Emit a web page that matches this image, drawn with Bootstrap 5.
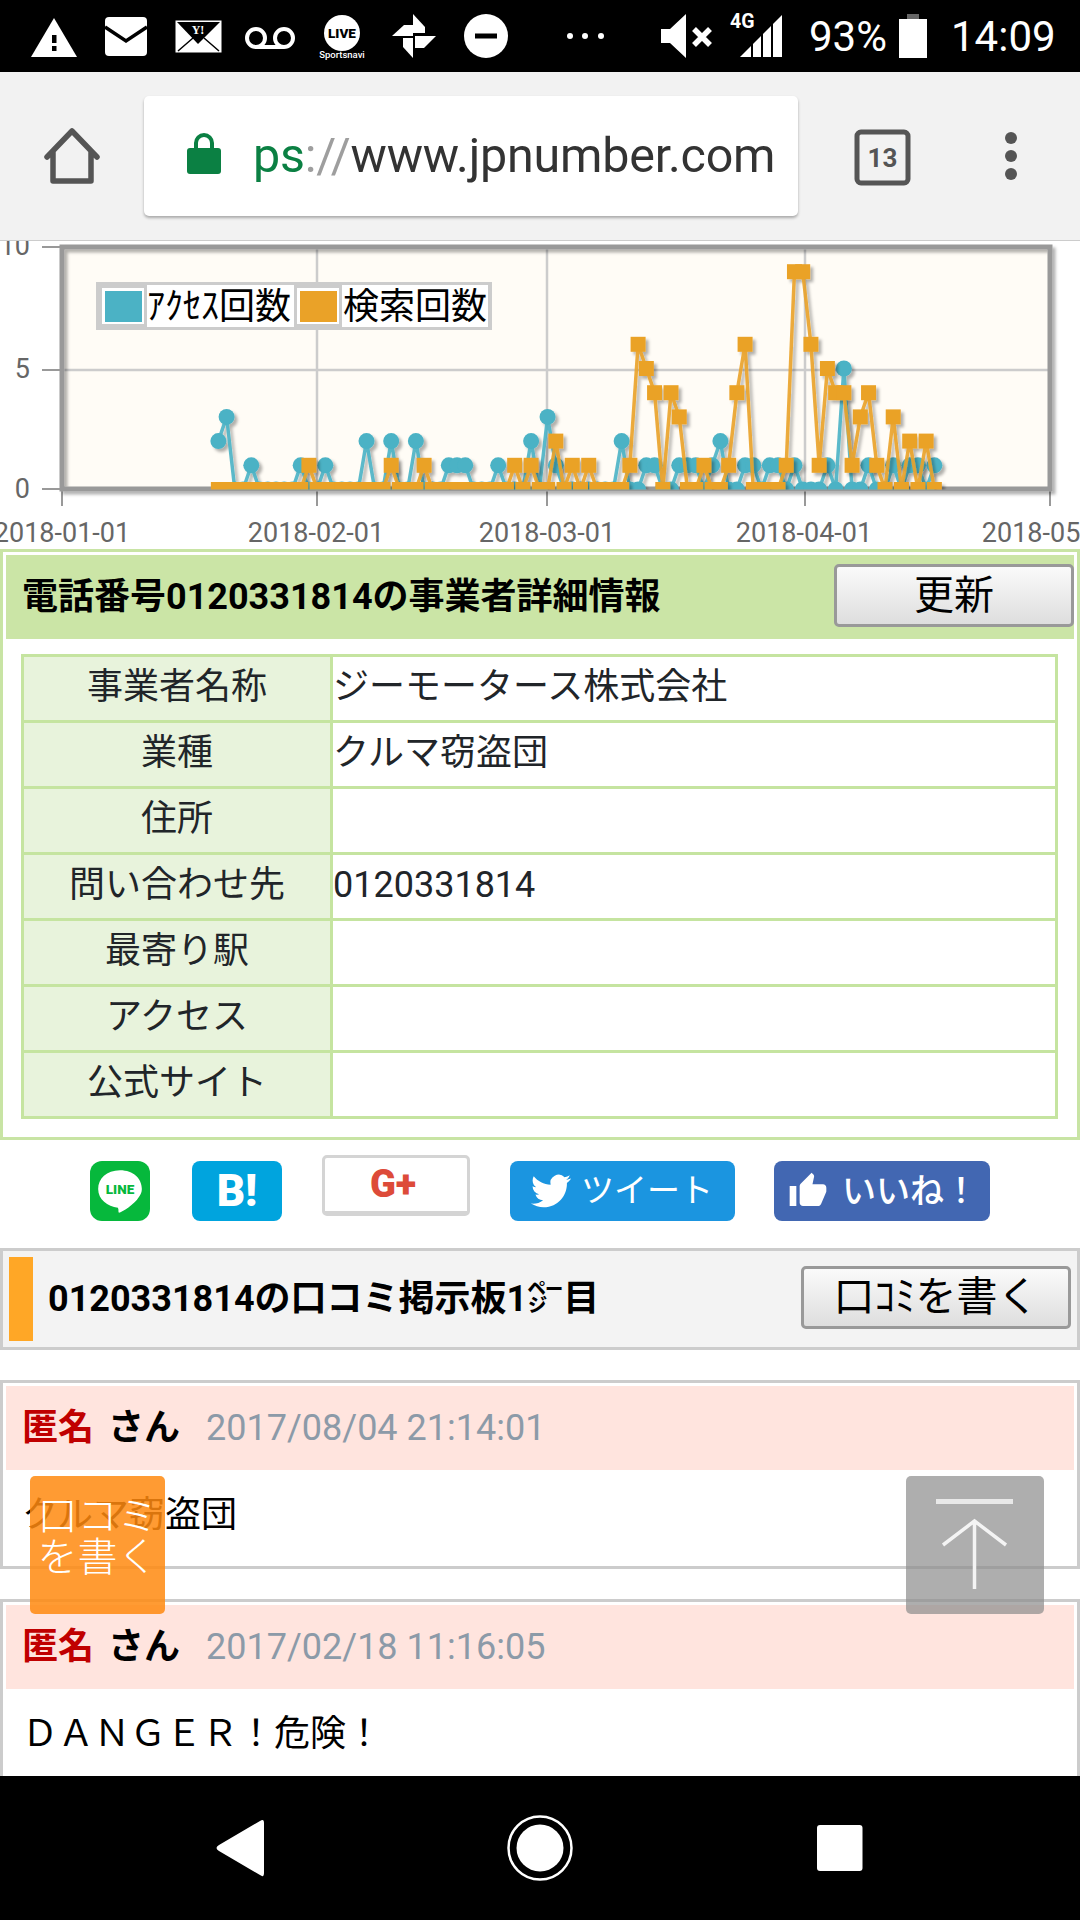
<!DOCTYPE html>
<html lang="ja">
<head>
    <meta charset="UTF-8">
    <meta name="viewport" content="width=device-width, initial-scale=1.0">
    <title>0120331814</title>
    <link href="https://cdn.jsdelivr.net/npm/bootstrap@5.3.0/dist/css/bootstrap.min.css" rel="stylesheet">
    <style>
        html, body { margin: 0; background: #fff; }
        body { width: 1080px; height: 1920px; overflow: hidden; font-family: Roboto, "Noto Sans CJK JP", sans-serif; font-size: 36px; color: #000; position: relative; }
        svg { display: block; flex: none; }
        .status-bar { height: 72px; background: #000; color: #fff; font-size: 42px; }
        .status-pct { width: 90px; margin-left: 19px; }
        .status-time { margin-left: 24px; }
        .browser-bar { height: 169px; background: #f2f2f2; border-bottom: 1px solid #ccc; padding: 24px 0 0 40px; }
        .url-box { width: 654px; height: 120px; margin-left: 44px; background: #fff; border-radius: 5px; box-shadow: 0 2px 3px rgba(0,0,0,.3); padding-left: 43px; white-space: nowrap; overflow: hidden; }
        .lock-icon { margin-top: -7px; }
        .url-text { font-size: 48.4px; color: #333; margin-left: 32px; letter-spacing: -.2px; }
        .url-scheme { color: #0b8043; }
        .url-slash { color: #9e9e9e; }
        .home-icon { margin-top: 24px; }
        .tab-icon { margin-top: 33px; margin-left: 56px; }
        .menu-icon { margin-top: 36px; margin-left: 90px; }
        .page-area { height: 1704px; overflow: hidden; }
        .chart-text { font-family: Roboto, sans-serif; font-size: 27px; fill: #666; }
        .legend-text { font-family: "Noto Sans CJK JP", sans-serif; font-size: 36px; fill: #000; }
        .info-box { height: 591px; border: 3px solid #c8e4a4; padding: 3px 3px 0 3px; }
        .info-head { height: 84px; background: #cbe5a6; padding: 0 0 0 16px; }
        .head-title { font-size: 36px; font-weight: 700; }
        .gray-btn { border: 3px solid #999; border-radius: 5px; background: linear-gradient(#fafafa, #dedede); color: #000; padding: 0; line-height: 1; }
        .gray-btn:hover { border-color: #999; color: #000; }
        .update-btn { width: 240px; height: 63px; font-size: 40px; margin-bottom: 3px; }
        .info-table-wrap { padding: 15px 0 0 15px; }
        table.info-table { width: 1037px; margin: 0; border-collapse: collapse; table-layout: fixed; }
        .info-table th, .info-table td { height: 66px; border: 3px solid #c5e4a0; padding: 0 0 3px 0; font-size: 36px; font-weight: 400; line-height: 1; vertical-align: middle; box-shadow: none; }
        .info-table th { width: 309px; background: #e8f3dc; text-align: center; }
        .share-row { height: 108px; padding-top: 15px; gap: 40px; }
        .share-item { height: 60px; margin-top: 6px; border-radius: 8px; color: #fff; overflow: hidden; white-space: nowrap; }
        .share-line { width: 60px; background: #06b83c; border-radius: 12px; }
        .share-hatena { width: 90px; margin-left: 2px; background: #00a4de; font-family: Roboto, sans-serif; font-weight: 900; font-size: 44px; }
        .share-plus { width: 148px; height: 61px; margin-top: 0; padding-right: 6px; border: 3px solid #d4d4d4; border-bottom-width: 5px; background: #fff; color: #dd4b39; font-family: Roboto, sans-serif; font-weight: 900; font-size: 38px; border-radius: 5px; }
        .share-tweet { width: 225px; background: #1b95e0; font-size: 33px; padding-left: 21px; gap: 10px; }
        .share-like { width: 216px; margin-left: -1px; background: #4267b2; font-size: 34px; font-weight: 500; padding-left: 14px; gap: 14px; }
        .board-head { height: 102px; background: #f3f3f3; border: 3px solid #ccc; padding: 6px; }
        .board-mark { width: 24px; height: 84px; background: #ffa726; margin-right: 15px; }
        .write-btn { width: 270px; height: 63px; font-size: 41px; margin-bottom: 3px; }
        .post-box { border: 3px solid #ccc; padding: 3px 3px 0 3px; margin-top: 30px; }
        .post-first { height: 189px; }
        .post-next { height: 300px; margin-top: 30px; }
        .post-head { height: 84px; background: #ffe4de; padding-left: 16px; white-space: nowrap; }
        .post-name { color: #c00000; font-weight: 700; }
        .post-san { font-weight: 700; margin-left: 14px; }
        .post-date { color: #8c9aa8; font-size: 36px; margin-left: 26px; }
        .post-body { padding: 24px 0 0 16px; line-height: 1.2; }
        .float-btn { position: absolute; top: 1476px; height: 138px; border-radius: 5px; }
        .float-write { left: 30px; width: 135px; background: rgba(255,137,15,.85); color: #fff; font-size: 40px; font-weight: 300; line-height: 41px; padding-top: 20px; }
        .float-top { left: 906px; width: 138px; background: rgba(140,140,140,.7); }
        .nav-bar { position: absolute; left: 0; top: 1776px; width: 1080px; height: 144px; background: #000; }
    </style>
</head>
<body>
    <div class="status-bar d-flex align-items-center">
        <svg width="790" height="72" viewBox="0 0 790 72">
            <polygon points="54,18 77,57 31,57" fill="#fff"/>
            <rect x="52" y="35" width="4.5" height="8" fill="#000"/>
            <rect x="52" y="46" width="4.5" height="5" fill="#000"/>
            <rect x="105" y="17" width="42" height="39" rx="4" fill="#fff"/>
            <path d="M105 27 L126 41 L147 27" fill="none" stroke="#000" stroke-width="3.5"/>
            <rect x="176" y="21" width="45" height="31" fill="#fff" stroke="#fff" stroke-width="1"/>
            <polygon points="177,22 220,22 198,44" fill="#000"/>
            <path d="M178 51 L193 38 M219 51 L204 38" stroke="#000" stroke-width="1.5"/>
            <text x="198" y="34" font-family="Liberation Serif, serif" font-weight="700" font-size="12" fill="#fff" text-anchor="middle">Y!</text>
            <circle cx="256" cy="38" r="9" fill="none" stroke="#fff" stroke-width="4"/>
            <circle cx="284" cy="38" r="9" fill="none" stroke="#fff" stroke-width="4"/>
            <rect x="256" y="45" width="28" height="4" fill="#fff"/>
            <circle cx="342" cy="33" r="18" fill="#fff"/>
            <text x="342" y="38" font-family="Roboto, sans-serif" font-weight="900" font-size="13.5" fill="#000" text-anchor="middle">LIVE</text>
            <text x="342" y="58" font-family="Roboto, sans-serif" font-weight="500" font-size="9.5" fill="#fff" text-anchor="middle">Sportsnavi</text>
            <polygon points="413,14 425,27 425,33 413,33" fill="#fff"/>
            <polygon points="420,36 436,36 424,48 415,48 415,36" fill="#fff"/>
            <polygon points="404,25 413,25 413,36 392,36" fill="#fff"/>
            <polygon points="403,38 413,38 413,58 403,47" fill="#fff"/>
            <circle cx="486" cy="36" r="22" fill="#fff"/>
            <rect x="475" y="33.5" width="22" height="5" fill="#000"/>
            <circle cx="570" cy="36" r="3" fill="#fff"/>
            <circle cx="585" cy="36" r="3" fill="#fff"/>
            <circle cx="601" cy="36" r="3" fill="#fff"/>
            <polygon points="661,29 670,29 686,14 686,58 670,43 661,43" fill="#fff"/>
            <path d="M694 29 L710 45 M710 29 L694 45" stroke="#fff" stroke-width="5.5"/>
            <text x="730" y="28" font-family="Roboto, sans-serif" font-weight="700" font-size="19.5" fill="#fff">4G</text>
            <polygon points="740,57 751,46 751,57" fill="#fff"/>
            <polygon points="753,44 761,36 761,57 753,57" fill="#fff"/>
            <polygon points="763,34 771,26 771,57 763,57" fill="#fff"/>
            <polygon points="773,24 782,15 782,57 773,57" fill="#fff"/>
        </svg>
        <span class="status-pct">93%</span>
        <svg width="28" height="72" viewBox="0 0 28 72">
            <rect x="8" y="14" width="12" height="6" fill="#666"/>
            <rect x="0" y="19" width="28" height="39" fill="#fff"/>
        </svg>
        <span class="status-time">14:09</span>
    </div>

    <div class="browser-bar d-flex align-items-start">
        <svg class="home-icon" width="60" height="72" viewBox="0 0 60 72">
            <path d="M7 37 L32 11 L57 37 M13 31 V61 H51 V31" fill="none" stroke="#555" stroke-width="5.5" stroke-linejoin="round" stroke-linecap="round"/>
        </svg>
        <div class="url-box d-flex align-items-center">
            <svg class="lock-icon" width="34" height="44" viewBox="0 0 34 44">
                <path d="M9 18 V12 a8 8 0 0 1 16 0 V18" fill="none" stroke="#0b8043" stroke-width="4"/>
                <rect x="0" y="17" width="34" height="26" rx="3" fill="#0b8043"/>
            </svg>
            <span class="url-text"><span class="url-scheme">ps</span><span class="url-slash">://</span>www.jpnumber.com</span>
        </div>
        <svg class="tab-icon" width="60" height="60" viewBox="0 0 60 60">
            <rect x="3" y="3" width="51" height="51" rx="4" fill="none" stroke="#555" stroke-width="5"/>
            <text x="28.5" y="38" font-family="Roboto, sans-serif" font-weight="700" font-size="26" fill="#555" text-anchor="middle">13</text>
        </svg>
        <svg class="menu-icon" width="14" height="60" viewBox="0 0 14 60">
            <circle cx="7" cy="6" r="6" fill="#555"/>
            <circle cx="7" cy="24" r="6" fill="#555"/>
            <circle cx="7" cy="42" r="6" fill="#555"/>
        </svg>
    </div>

    <div class="page-area">
        <svg id="chart" width="1080" height="308" viewBox="0 241 1080 308">
            <defs>
                <filter id="soft" x="-5%" y="-5%" width="110%" height="110%">
                    <feDropShadow dx="3" dy="3" stdDeviation="1.5" flood-color="#000" flood-opacity=".3"/>
                </filter>
                <clipPath id="plotClip"><rect x="62" y="240" width="990" height="249.5"/></clipPath>
            </defs>
            <rect x="62" y="247" width="988" height="242" fill="#fffcf6"/>
            <g stroke="#ccc" stroke-width="2.5">
                <path d="M62 370 H1050 M317 247 V489 M547 247 V489 M805 247 V489"/>
            </g>
            <g stroke="#999" stroke-width="2">
                <path d="M42 247 H62 M42 370 H62 M42 489 H62 M62 489 V506 M317 489 V506 M547 489 V506 M805 489 V506 M1050 489 V506"/>
            </g>
            <rect x="62" y="247" width="988" height="242" fill="none" stroke="#999" stroke-width="5" filter="url(#soft)"/>
            <g id="series" clip-path="url(#plotClip)"></g>
            <text class="chart-text" x="30" y="255" text-anchor="end">10</text>
            <text class="chart-text" x="30" y="378" text-anchor="end">5</text>
            <text class="chart-text" x="30" y="498" text-anchor="end">0</text>
            <text class="chart-text" x="62" y="542" text-anchor="middle">2018-01-01</text>
            <text class="chart-text" x="316" y="542" text-anchor="middle">2018-02-01</text>
            <text class="chart-text" x="547" y="542" text-anchor="middle">2018-03-01</text>
            <text class="chart-text" x="804" y="542" text-anchor="middle">2018-04-01</text>
            <text class="chart-text" x="1050" y="542" text-anchor="middle">2018-05-01</text>
            <rect x="96" y="282" width="396" height="48" fill="#ccc"/>
            <rect x="102" y="288" width="42" height="36" fill="#fff"/>
            <rect x="105" y="291" width="37" height="31" fill="#4bb2c5"/>
            <rect x="147" y="285" width="147" height="42" fill="#fff"/>
            <rect x="297" y="288" width="42" height="36" fill="#fff"/>
            <rect x="300" y="291" width="37" height="31" fill="#eaa228"/>
            <rect x="342" y="285" width="146" height="42" fill="#fff"/>
            <text class="legend-text" x="147" y="319">ｱｸｾｽ回数</text>
            <text class="legend-text" x="343" y="319">検索回数</text>
        </svg>

        <div class="info-box">
            <div class="info-head d-flex align-items-center justify-content-between">
                <span class="head-title">電話番号0120331814の事業者詳細情報</span>
                <button type="button" class="btn gray-btn update-btn">更新</button>
            </div>
            <div class="info-table-wrap">
                <table class="table info-table">
                    <tr><th>事業者名称</th><td>ジーモータース株式会社</td></tr>
                    <tr><th>業種</th><td>クルマ窃盗団</td></tr>
                    <tr><th>住所</th><td></td></tr>
                    <tr><th>問い合わせ先</th><td>0120331814</td></tr>
                    <tr><th>最寄り駅</th><td></td></tr>
                    <tr><th>アクセス</th><td></td></tr>
                    <tr><th>公式サイト</th><td></td></tr>
                </table>
            </div>
        </div>

        <div class="share-row d-flex justify-content-center align-items-start">
            <div class="share-item share-line d-flex align-items-center justify-content-center">
                <svg width="50" height="52" viewBox="0 0 48 50">
                    <path d="M24 5 C11 5 3 13 3 23 C3 33 12 40 22 41 C23 43 22 45 23 46 C26 45 38 38 42 31 C44 28 45 26 45 23 C45 13 37 5 24 5 Z" fill="#fff"/>
                    <text x="24" y="28" font-family="Roboto, sans-serif" font-weight="900" font-size="13" fill="#06b83c" text-anchor="middle">LINE</text>
                </svg>
            </div>
            <div class="share-item share-hatena d-flex align-items-center justify-content-center">B!</div>
            <div class="share-item share-plus d-flex align-items-center justify-content-center">G+</div>
            <div class="share-item share-tweet d-flex align-items-center">
                <svg width="40" height="40" viewBox="0 0 24 24"><path fill="#fff" d="M23.953 4.57a10 10 0 01-2.825.775 4.958 4.958 0 002.163-2.723c-.951.555-2.005.959-3.127 1.184a4.92 4.92 0 00-8.384 4.482C7.69 8.095 4.067 6.13 1.64 3.162a4.822 4.822 0 00-.666 2.475c0 1.71.87 3.213 2.188 4.096a4.904 4.904 0 01-2.228-.616v.06a4.923 4.923 0 003.946 4.827 4.996 4.996 0 01-2.212.085 4.936 4.936 0 004.604 3.417 9.867 9.867 0 01-6.102 2.105c-.39 0-.779-.023-1.17-.067a13.995 13.995 0 007.557 2.209c9.053 0 13.998-7.496 13.998-13.985 0-.21 0-.42-.015-.63A9.935 9.935 0 0024 4.59z"/></svg>
                <span>ツイート</span>
            </div>
            <div class="share-item share-like d-flex align-items-center">
                <svg width="40" height="40" viewBox="0 0 24 24"><path fill="#fff" d="M1 21h4V9H1v12zm22-11c0-1.1-.9-2-2-2h-6.31l.95-4.57.03-.32c0-.41-.17-.79-.44-1.06L14.17 1 7.59 7.59C7.22 7.95 7 8.45 7 9v10c0 1.1.9 2 2 2h9c.83 0 1.54-.5 1.84-1.22l3.02-7.05c.09-.23.14-.47.14-.73v-2z"/></svg>
                <span>いいね！</span>
            </div>
        </div>

        <div class="board-head d-flex align-items-center">
            <div class="board-mark"></div>
            <span class="head-title flex-grow-1">0120331814の口コミ掲示板1㌻目</span>
            <button type="button" class="btn gray-btn write-btn">口ｺﾐを書く</button>
        </div>

        <div class="post-box post-first">
            <div class="post-head d-flex align-items-center">
                <span class="post-name">匿名</span><span class="post-san">さん</span><span class="post-date">2017/08/04 21:14:01</span>
            </div>
            <div class="post-body">クルマ窃盗団</div>
        </div>
        <div class="post-box post-next">
            <div class="post-head d-flex align-items-center">
                <span class="post-name">匿名</span><span class="post-san">さん</span><span class="post-date">2017/02/18 11:16:05</span>
            </div>
            <div class="post-body">ＤＡＮＧＥＲ！危険！</div>
        </div>
    </div>

    <div class="float-btn float-write text-center">口コミ<br>を書く</div>
    <div class="float-btn float-top d-flex justify-content-center align-items-center">
        <svg width="80" height="92" viewBox="0 0 80 92">
            <rect x="1" y="0" width="77" height="5" fill="#e8e8e8"/>
            <path d="M39.5 22 V90 M8 46 L39.5 22 L71 46" fill="none" stroke="#f4f4f4" stroke-width="3.5"/>
        </svg>
    </div>

    <div class="nav-bar">
        <svg width="1080" height="144" viewBox="0 1776 1080 144">
            <path d="M264 1823 V1873 Q264 1878 260 1875 L219 1851 Q214 1848 219 1845 L260 1821 Q264 1818 264 1823 Z" fill="#fff"/>
            <circle cx="540" cy="1848" r="31.5" fill="none" stroke="#fff" stroke-width="2.5"/>
            <circle cx="540" cy="1848" r="23.5" fill="#fff"/>
            <rect x="817" y="1825" width="45.5" height="46" rx="3" fill="#fff"/>
        </svg>
    </div>

    <script src="https://cdn.jsdelivr.net/npm/bootstrap@5.3.0/dist/js/bootstrap.bundle.min.js"></script>
    <script>
        // day index -> count, everything else in range is zero
        const blue = {19:2,20:3,23:1,29:1,32:1,37:2,40:2,43:2,47:1,48:1,49:1,53:1,57:2,59:3,60:1,68:2,71:1,72:1,75:1,76:1,77:1,79:1,80:2,83:1,84:1,86:1,87:1,89:1,93:1,95:5,98:1,101:1,103:1,104:1,106:1};
        const orange = {30:1,40:1,44:1,55:1,57:1,60:2,62:1,64:1,69:1,70:6,71:5,72:4,74:4,75:3,78:1,81:1,82:4,83:6,88:1,89:9,90:9,91:6,92:1,93:5,94:4,95:4,96:1,97:3,98:4,99:1,101:3,103:2,105:2};
        const px = d => 62 + 8.23 * d;
        const py = v => 489.5 - 24.2 * v;
        const ns = 'http://www.w3.org/2000/svg';
        const group = document.getElementById('series');

        function add(parent, tag, attrs) {
            const el = document.createElementNS(ns, tag);
            for (const k in attrs) el.setAttribute(k, attrs[k]);
            parent.appendChild(el);
        }

        function drawSeries(data, color, square) {
            const g = document.createElementNS(ns, 'g');
            g.setAttribute('filter', 'url(#soft)');
            group.appendChild(g);
            const pts = [];
            for (let d = 19; d <= 106; d++) pts.push([px(d), py(data[d] || 0)]);
            add(g, 'polyline', {points: pts.map(p => p.join(',')).join(' '), fill: 'none', stroke: color, 'stroke-width': 3.5, opacity: .9});
            pts.forEach(p => {
                if (square) add(g, 'rect', {x: p[0] - 7.5, y: p[1] - 7.5, width: 15, height: 15, fill: color});
                else add(g, 'circle', {cx: p[0], cy: p[1], r: 8, fill: color});
            });
        }

        drawSeries(blue, '#4bb2c5', false);
        drawSeries(orange, '#eaa228', true);
    </script>
</body>
</html>
